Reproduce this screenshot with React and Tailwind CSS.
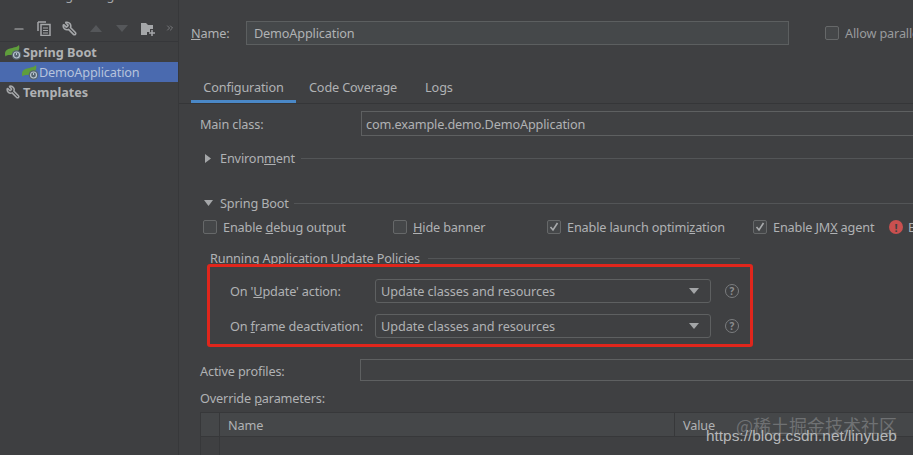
import React from "react";
import { Minus, Wrench, ChevronsRight } from "lucide-react";

const SpringIcon = () => (
  <svg width="17" height="16" viewBox="0 0 17 16" className="shrink-0">
    <path d="M0 10C0 6 3 5 5 4.500 8 3.500 12 3.500 14 1c.5 2 .5 4-.5 5.500-2 3-6 5-10 4.500C2 11 1 12 .8 12.500.2 12 0 11 0 10z" fill="#5f9e3c" />
    <circle cx="11.500" cy="11" r="4.800" fill="#566470" />
    <circle cx="11.500" cy="11" r="3" fill="none" stroke="#b8c4cf" strokeWidth="1.200" />
    <path d="M11.500 9v2" stroke="#b8c4cf" strokeWidth="1" />
  </svg>
);

const Check = ({ checked }) => (
  <span className="flex h-[14px] w-[14px] shrink-0 items-center justify-center rounded-[2px] border border-[#666869] bg-[#454749]">
    {checked && (
      <svg width="10" height="10" viewBox="0 0 10 10">
        <path d="M1.500 5l2.500 3 4.500-7" fill="none" stroke="#a9abad" strokeWidth="1.600" />
      </svg>
    )}
  </span>
);

const Help = () => (
  <span className="ml-[14px] flex h-[14px] w-[14px] shrink-0 items-center justify-center rounded-full border border-[#7b7d7f] text-[10px] font-bold leading-none tracking-normal text-[#8b8d8f]">
    ?
  </span>
);

const Caret = () => (
  <svg width="12" height="7" viewBox="0 0 12 7" className="shrink-0">
    <path d="M1 0h10L6 6z" fill="#a3a5a7" />
  </svg>
);

const PolicyRow = ({ label, className }) => (
  <div className={`flex items-center whitespace-nowrap ${className}`}>
    <span className="w-[145px] shrink-0">{label}</span>
    <div className="flex h-[24px] w-[336px] shrink-0 items-center justify-between rounded-[3px] border border-[#5e6061] bg-[#3f4042] pl-[5px] pr-[10px]">
      <span className="tracking-[-0.08px]">Update classes and resources</span>
      <Caret />
    </div>
    <Help />
  </div>
);

export default function App() {
  return (
    <div
      className="relative flex h-[455px] w-[913px] overflow-hidden bg-[#3f4042] text-[12.7px] leading-[18px] tracking-[-0.15px] text-[#b0b2b4]"
      style={{ fontFamily: '"Noto Sans", sans-serif' }}
    >
      {/* left tree */}
      <div className="flex w-[179px] shrink-0 flex-col border-r border-[#37383a] bg-[#3e3f41]">
        <div className="-mt-[14px] h-[18px] whitespace-nowrap pl-[6px] text-[#a5a7a9]">Run/Debug Configurations</div>
        <div className="flex h-[38px] items-center border-b border-[#36373a] pl-[12px] pt-[12px]">
          <Minus size={14} strokeWidth={2} className="text-[#b6b8ba]" />
          <svg width="14" height="15" viewBox="0 0 14 15" className="ml-[11px]">
            <path d="M1 1h8M1 1v9" stroke="#a5a7a9" strokeWidth="1.500" fill="none" />
            <rect x="4" y="3.500" width="9" height="11" fill="none" stroke="#a5a7a9" strokeWidth="1.500" />
            <path d="M6 7h5M6 9.500h5M6 12h5" stroke="#a5a7a9" strokeWidth="1.200" />
          </svg>
          <Wrench size={15} strokeWidth={2.600} className="ml-[11px] -scale-x-100 text-[#a5a7a9]" />
          <svg width="12" height="7" viewBox="0 0 12 7" className="ml-[13px]">
            <path d="M6 0l6 7H0z" fill="#55575a" />
          </svg>
          <svg width="12" height="7" viewBox="0 0 12 7" className="ml-[14px]">
            <path d="M0 0h12L6 7z" fill="#55575a" />
          </svg>
          <svg width="15" height="14" viewBox="0 0 15 14" className="ml-[13px]">
            <path d="M0 1h5l2 2h5v4H9v3H6v3H0z" fill="#a5a7a9" />
            <path d="M11 8v6M8 11h6" stroke="#a5a7a9" strokeWidth="1.500" />
          </svg>
          <ChevronsRight size={10} strokeWidth={1.500} className="ml-[9px] -mt-[2px] text-[#9a9c9e]" />
        </div>
        <div className="flex h-[20px] items-center pl-[5px] font-bold tracking-normal text-[#b0b2b4]">
          <SpringIcon />
          <span className="pl-[1px]">Spring Boot</span>
        </div>
        <div className="flex h-[20px] items-center bg-[#4a6aaf] pl-[22px] text-[#b6c3dc]">
          <SpringIcon />
          <span>DemoApplication</span>
        </div>
        <div className="flex h-[20px] items-center pl-[6px] font-bold tracking-normal">
          <Wrench size={14} strokeWidth={2.600} className="-scale-x-100 text-[#a5a7a9]" />
          <span className="pl-[3px]">Templates</span>
        </div>
      </div>

      {/* right form */}
      <div className="flex min-w-0 flex-1 flex-col">
        <div className="mt-[21px] flex h-[24px] items-center whitespace-nowrap pl-[12px]">
          <span className="w-[55px] shrink-0">
            <span className="underline">N</span>ame:
          </span>
          <div className="flex h-[24px] w-[543px] shrink-0 items-center border border-[#5c5f60] bg-[#45484a] pl-[7px]">DemoApplication</div>
          <div className="ml-[36px] flex items-center gap-[6px] text-[#999b9d]">
            <Check />
            <span>Allow parallel run</span>
          </div>
        </div>

        <div className="mt-[27px] flex h-[32px] border-b border-[#353638] pl-[12px]">
          <div className="flex w-[105px] items-center justify-center border-b-[3px] border-[#4a88c7] pt-[2px]">Configuration</div>
          <div className="flex items-center pb-[1px] pl-[13px]">Code Coverage</div>
          <div className="flex items-center pb-[1px] pl-[28px]">Logs</div>
        </div>

        <div className="mt-[7px] flex h-[25px] items-center pl-[21px]">
          <span className="w-[161px] shrink-0">Main class:</span>
          <div className="flex h-[25px] w-[600px] shrink-0 items-center border border-[#5e6061] bg-[#404143] pl-[4px]">com.example.demo.DemoApplication</div>
        </div>

        <div className="mt-[13px] flex h-[18px] items-center pl-[26px]">
          <svg width="6" height="9" viewBox="0 0 6 9" className="shrink-0">
            <path d="M0 0l6 4.500L0 9z" fill="#a5a7a9" />
          </svg>
          <span className="ml-[9px] whitespace-nowrap">
            Environ<span className="underline">m</span>ent
          </span>
          <div className="ml-[6px] h-px flex-1 bg-[#535557]" />
        </div>

        <div className="mt-[27px] flex h-[18px] items-center pl-[25px]">
          <svg width="9" height="6" viewBox="0 0 9 6" className="shrink-0">
            <path d="M0 0h9L4.500 6z" fill="#a5a7a9" />
          </svg>
          <span className="ml-[7px] whitespace-nowrap">
            Sprin<span className="underline">g</span> Boot
          </span>
          <div className="ml-[5px] h-px flex-1 bg-[#535557]" />
        </div>

        <div className="mt-[6px] flex h-[18px] items-center whitespace-nowrap pl-[24px]">
          <Check />
          <span className="ml-[6px] w-[170px] shrink-0">
            Enable <span className="underline">d</span>ebug output
          </span>
          <Check />
          <span className="ml-[6px] w-[134px] shrink-0">
            <span className="underline">H</span>ide banner
          </span>
          <Check checked />
          <span className="ml-[6px] w-[186px] shrink-0">
            Enable launch optimi<span className="underline">z</span>ation
          </span>
          <Check checked />
          <span className="ml-[6px] w-[116px] shrink-0">
            Enable JM<span className="underline">X</span> agent
          </span>
          <span className="flex h-[14px] w-[14px] shrink-0 items-center justify-center rounded-full bg-[#c9504f] text-[11px] font-bold leading-none text-[#3f4042]">!</span>
          <span className="ml-[5px]">Enable</span>
        </div>

        <div className="mt-[13px] flex h-[18px] w-[561px] items-center whitespace-nowrap pl-[31px]">
          <span>Running Application Update Policies</span>
          <div className="ml-[8px] h-px flex-1 bg-[#535557]" />
        </div>

        <PolicyRow
          className="mt-[12px] pl-[51px]"
          label={
            <>
              On '<span className="underline">U</span>pdate' action:
            </>
          }
        />
        <PolicyRow
          className="mt-[11px] pl-[51px]"
          label={
            <>
              On <span className="underline">f</span>rame deactivation:
            </>
          }
        />

        <div className="mt-[21px] flex h-[22px] items-center pl-[21px]">
          <span className="w-[160px] shrink-0 pt-[1px]">Active profiles:</span>
          <div className="h-[22px] w-[600px] shrink-0 border border-[#5e6061] bg-[#404143]" />
        </div>

        <div className="mt-[8px] h-[18px] pl-[21px]">
          Override <span className="underline">p</span>arameters:
        </div>

        <div className="ml-[21px] mt-[5px] flex-1 border-l border-t border-[#37383a]">
          <div className="flex h-[24px] border-b border-[#37383a] bg-[#454749]">
            <div className="w-[19px] shrink-0 border-r border-[#37383a]" />
            <div className="flex w-[455px] shrink-0 items-center border-r border-[#37383a] pl-[8px]">Name</div>
            <div className="flex items-center pl-[8px]">Value</div>
          </div>
          <div className="h-full w-[19px] border-r border-[#37383a]" />
        </div>
      </div>

      {/* red annotation box */}
      <div className="absolute left-[207px] top-[264px] h-[83px] w-[546px] rounded-[3px] border-[3px] border-[#e0261c]" />

      {/* watermarks */}
      <div
        className="absolute left-[736px] top-[415px] whitespace-nowrap text-[18px] leading-[20px] tracking-normal text-[#6f7173]"
        style={{ fontFamily: '"Noto Sans CJK SC", sans-serif' }}
      >
        @稀土掘金技术社区
      </div>
      <div
        className="absolute left-[706px] top-[426px] whitespace-nowrap text-[15.4px] leading-[20px] tracking-normal text-[#b5b7b9]"
        style={{ fontFamily: '"Liberation Sans", sans-serif' }}
      >
        https://blog.csdn.net/linyueb
      </div>
    </div>
  );
}
